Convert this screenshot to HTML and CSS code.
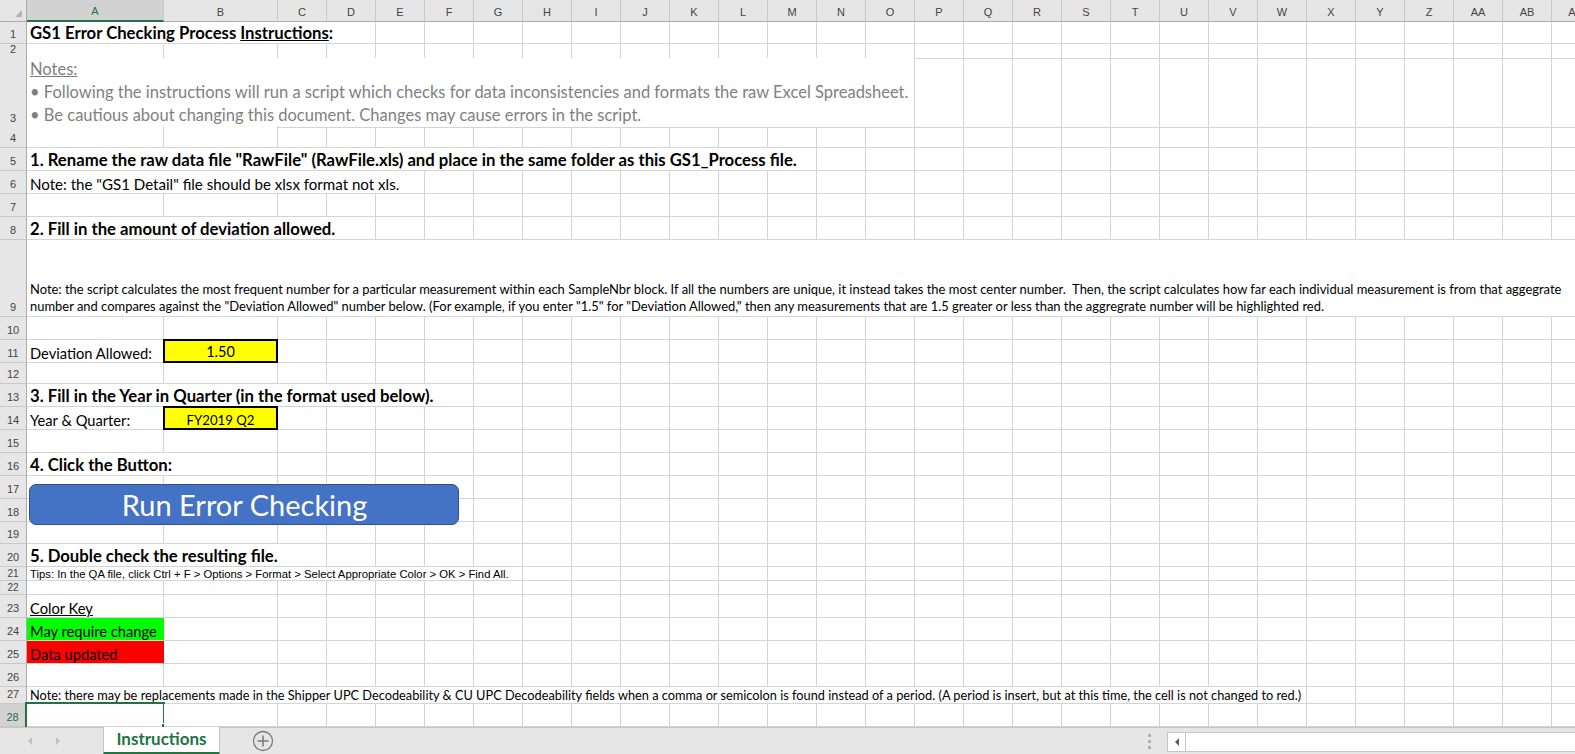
FILE: index.html
```html
<!DOCTYPE html>
<html>
<head>
<meta charset="utf-8">
<title>GS1 Error Checking Process</title>
<link rel="stylesheet" href="styles.css">
</head>
<body>
<div class="app">
  <div class="sheet">
    <div class="grid colhdr">
      <div class="ch corner"></div>
      <div class="ch sel">A</div><div class="ch">B</div><div class="ch">C</div><div class="ch">D</div><div class="ch">E</div><div class="ch">F</div><div class="ch">G</div><div class="ch">H</div><div class="ch">I</div><div class="ch">J</div><div class="ch">K</div><div class="ch">L</div><div class="ch">M</div><div class="ch">N</div><div class="ch">O</div><div class="ch">P</div><div class="ch">Q</div><div class="ch">R</div><div class="ch">S</div><div class="ch">T</div><div class="ch">U</div><div class="ch">V</div><div class="ch">W</div><div class="ch">X</div><div class="ch">Y</div><div class="ch">Z</div><div class="ch">AA</div><div class="ch">AB</div><div class="ch">AC</div>
    </div>

    <div class="grid r h22"><div class="rh">1</div><div class="c to-d title">GS1 Error Checking Process <u>Instructions</u>:</div><div class="fill from-e"></div></div>
    <div class="grid r h14"><div class="rh">2</div><div class="c"></div><div class="c"></div><div class="fill from-c"></div></div>
    <div class="grid r h68"><div class="rh">3</div><div class="c to-o notes"><div><u>Notes:</u></div><div>• Following the instructions will run a script which checks for data inconsistencies and formats the raw Excel Spreadsheet.</div><div>• Be cautious about changing this document. Changes may cause errors in the script.</div></div><div class="fill from-p"></div></div>
    <div class="grid r h22"><div class="rh">4</div><div class="c"></div><div class="c"></div><div class="fill from-c"></div></div>
    <div class="grid r h23"><div class="rh">5</div><div class="c to-m head">1. Rename the raw data file "RawFile" (RawFile.xls) and place in the same folder as this GS1_Process file.</div><div class="fill from-n"></div></div>
    <div class="grid r h23"><div class="rh">6</div><div class="c to-e body">Note: the "GS1 Detail" file should be xlsx format not xls.</div><div class="fill from-f"></div></div>
    <div class="grid r h23"><div class="rh">7</div><div class="c"></div><div class="c"></div><div class="fill from-c"></div></div>
    <div class="grid r h23"><div class="rh">8</div><div class="c to-d head">2. Fill in the amount of deviation allowed.</div><div class="fill from-e"></div></div>
    <div class="grid r h77"><div class="rh">9</div><div class="c to-end small lines"><div>Note: the script calculates the most frequent number for a particular measurement within each SampleNbr block. If all the numbers are unique, it instead takes the most center number.  Then, the script calculates how far each individual measurement is from that aggegrate</div><div>number and compares against the "Deviation Allowed" number below. (For example, if you enter "1.5" for "Deviation Allowed," then any measurements that are 1.5 greater or less than the aggregrate number will be highlighted red.</div></div></div>
    <div class="grid r h23"><div class="rh">10</div><div class="c"></div><div class="c"></div><div class="fill from-c"></div></div>
    <div class="grid r h23"><div class="rh">11</div><div class="c label">Deviation Allowed:</div><div class="c input">1.50</div><div class="fill from-c"></div></div>
    <div class="grid r h21"><div class="rh">12</div><div class="c"></div><div class="c"></div><div class="fill from-c"></div></div>
    <div class="grid r h23"><div class="rh">13</div><div class="c to-f head">3. Fill in the Year in Quarter (in the format used below).</div><div class="fill from-g"></div></div>
    <div class="grid r h23"><div class="rh">14</div><div class="c label">Year &amp; Quarter:</div><div class="c input input-sm">FY2019 Q2</div><div class="fill from-c"></div></div>
    <div class="grid r h23"><div class="rh">15</div><div class="c"></div><div class="c"></div><div class="fill from-c"></div></div>
    <div class="grid r h23"><div class="rh">16</div><div class="c to-b head">4. Click the Button:</div><div class="fill from-c"></div></div>
    <div class="grid r h23"><div class="rh">17</div><div class="c"></div><div class="c"></div><div class="fill from-c"></div></div>
    <div class="grid r h23"><div class="rh">18</div><div class="c"></div><div class="c"></div><div class="fill from-c"></div></div>
    <div class="grid r h22"><div class="rh">19</div><div class="c"></div><div class="c"></div><div class="fill from-c"></div></div>
    <div class="grid r h23"><div class="rh">20</div><div class="c to-c head">5. Double check the resulting file.</div><div class="fill from-d"></div></div>
    <div class="grid r h14"><div class="rh rh-sm">21</div><div class="c to-g tips">Tips: In the QA file, click Ctrl + F &gt; Options &gt; Format &gt; Select Appropriate Color &gt; OK &gt; Find All.</div><div class="fill from-h"></div></div>
    <div class="grid r h14"><div class="rh rh-sm">22</div><div class="c"></div><div class="c"></div><div class="fill from-c"></div></div>
    <div class="grid r h23"><div class="rh">23</div><div class="c label"><u>Color Key</u></div><div class="c"></div><div class="fill from-c"></div></div>
    <div class="grid r h23"><div class="rh">24</div><div class="c label key-green">May require change</div><div class="c"></div><div class="fill from-c"></div></div>
    <div class="grid r h23"><div class="rh">25</div><div class="c label key-red">Data updated</div><div class="c"></div><div class="fill from-c"></div></div>
    <div class="grid r h23"><div class="rh">26</div><div class="c"></div><div class="c"></div><div class="fill from-c"></div></div>
    <div class="grid r h17"><div class="rh">27</div><div class="c to-w small small-note">Note: there may be replacements made in the Shipper UPC Decodeability &amp; CU UPC Decodeability fields when a comma or semicolon is found instead of a period. (A period is insert, but at this time, the cell is not changed to red.)</div><div class="fill from-x"></div></div>
    <div class="grid r h23"><div class="rh rh-sel">28</div><div class="c active"><span class="selbox"><span class="handle"></span></span></div><div class="c"></div><div class="fill from-c"></div></div>

    <div class="run-btn">Run Error Checking</div>
  </div>

  <div class="tabbar">
    <div class="tabnav">
      <svg width="8" height="10" viewBox="0 0 8 10"><path d="M6 1 L2 5 L6 9 Z" fill="#c2c2c2"/></svg>
      <svg width="8" height="10" viewBox="0 0 8 10"><path d="M2 1 L6 5 L2 9 Z" fill="#c2c2c2"/></svg>
    </div>
    <div class="tab">Instructions</div>
    <div class="addtab">
      <svg width="22" height="22" viewBox="0 0 22 22"><circle cx="11" cy="11" r="9.5" fill="none" stroke="#7a7a7a" stroke-width="1.3"/><path d="M11 5.5 V16.5 M5.5 11 H16.5" stroke="#7a7a7a" stroke-width="1.5"/></svg>
    </div>
    <div class="spacer"></div>
    <div class="grip"><i></i><i></i><i></i></div>
    <div class="hscroll">
      <div class="hs-btn"><svg width="6" height="8" viewBox="0 0 6 8"><path d="M5 0 L1 4 L5 8 Z" fill="#5a5a5a"/></svg></div>
      <div class="hs-track"></div>
    </div>
  </div>
</div>
</body>
</html>
```

FILE: styles.css
```css
* { box-sizing: border-box; }
html, body { margin: 0; padding: 0; }
body {
  width: 1575px;
  height: 754px;
  overflow: hidden;
  background: #fff;
  font-family: Lato, "Open Sans", sans-serif;
  color: #000;
}
.app { display: flex; flex-direction: column; height: 754px; }
.sheet { position: relative; flex: 0 0 727px; overflow: hidden; }

.grid {
  display: grid;
  grid-template-columns: 27px 137px 114px repeat(27, 49px);
  width: 1600px;
}

/* column header */
.colhdr { height: 22px; background: #e6e6e6; }
.ch {
  border-right: 1px solid #c8c8c8;
  border-bottom: 1px solid #ababab;
  font: 11px "Liberation Sans", Arial, sans-serif;
  color: #444;
  display: flex;
  align-items: center;
  justify-content: center;
  padding-top: 2px;
}
.ch.sel { background: #d2d2d2; color: #217346; border-bottom: 2px solid #217346; }
.corner { position: relative; border-right-color: #ababab; }
.corner::after {
  content: "";
  position: absolute;
  right: 4px;
  bottom: 4px;
  border-left: 7px solid transparent;
  border-bottom: 7px solid #b4b4b4;
}

/* rows */
.h14 { height: 14px; }
.h17 { height: 17px; }
.h21 { height: 21px; }
.h22 { height: 22px; }
.h23 { height: 23px; }
.h68 { height: 68px; }
.h77 { height: 77px; }

.rh {
  background: #e6e6e6;
  border-right: 1px solid #ababab;
  border-bottom: 1px solid #c8c8c8;
  font: 11px "Liberation Sans", Arial, sans-serif;
  color: #444;
  display: flex;
  align-items: flex-end;
  justify-content: center;
  padding-bottom: 3px;
  line-height: 1;
}
.rh-sm { align-items: center; padding-bottom: 0; font-size: 10px; }
.rh-sel { background: #d2d2d2; color: #217346; border-right: 2px solid #217346; }

.c {
  position: relative;
  border-right: 1px solid #d4d4d4;
  border-bottom: 1px solid #d4d4d4;
  background: #fff;
  white-space: pre;
  display: flex;
  align-items: flex-end;
  padding: 0 0 0 3px;
  font-size: 14.8px;
  line-height: 1.15;
}
.fill {
  border-bottom: 1px solid #d4d4d4;
  background: repeating-linear-gradient(to right, transparent 0 48px, #d4d4d4 48px 49px);
}

/* spans */
.to-b { grid-column: 2 / 4; }
.to-c { grid-column: 2 / 5; }
.to-d { grid-column: 2 / 6; }
.to-e { grid-column: 2 / 7; }
.to-f { grid-column: 2 / 8; }
.to-g { grid-column: 2 / 9; }
.to-m { grid-column: 2 / 15; }
.to-o { grid-column: 2 / 17; }
.to-w { grid-column: 2 / 25; }
.to-end { grid-column: 2 / -1; border-right: none; }
.from-c { grid-column: 4 / -1; }
.from-d { grid-column: 5 / -1; }
.from-e { grid-column: 6 / -1; }
.from-f { grid-column: 7 / -1; }
.from-g { grid-column: 8 / -1; }
.from-h { grid-column: 9 / -1; }
.from-n { grid-column: 15 / -1; }
.from-p { grid-column: 17 / -1; }
.from-x { grid-column: 25 / -1; }

/* text styles */
.title { font-weight: 700; font-size: 16.7px; }
.head { font-weight: 700; font-size: 16.7px; }
.body { font-size: 15.1px; }
.label { font-size: 14.7px; }
.small { font-size: 12.95px; }
.small-note { font-size: 12.77px; }
.notes {
  flex-direction: column;
  align-items: flex-start;
  justify-content: flex-end;
  color: #7f7f7f;
  font-size: 16.5px;
  line-height: 23px;
  padding-bottom: 0;
}
.lines {
  flex-direction: column;
  align-items: flex-start;
  justify-content: flex-end;
  line-height: 17px;
  padding-bottom: 1px;
}
.tips {
  font: 11.3px "Liberation Sans", Arial, sans-serif;
  align-items: center;
}
.input {
  background: #ffff00;
  border: 2px solid #000;
  margin: -1px 0 0 -1px;
  justify-content: center;
  padding: 0;
  font-size: 14.5px;
}
.input-sm { font-size: 13.2px; }
.key-green { background: #00ff00; border-right-color: #00ff00; }
.key-red { background: #ff0000; border-right-color: #ff0000; }

/* selection */
.active { padding: 0; }
.selbox {
  position: absolute;
  left: -2px;
  top: -2px;
  right: -2px;
  bottom: -6px;
  border: 2px solid #217346;
  border-bottom: none;
}
.handle {
  position: absolute;
  right: -4px;
  bottom: 3px;
  width: 6px;
  height: 6px;
  background: #217346;
  border: 1px solid #fff;
}

/* floating shape */
.run-btn {
  position: absolute;
  left: 29px;
  top: 484px;
  width: 430px;
  height: 41px;
  background: #4472c4;
  border: 1px solid #2f528f;
  border-radius: 7px;
  color: #fff;
  font-size: 29px;
  display: flex;
  align-items: center;
  justify-content: center;
  padding-left: 1px;
}

/* sheet tab bar */
.tabbar {
  flex: 0 0 27px;
  display: flex;
  align-items: stretch;
  background: #e6e6e6;
  border-top: 1px solid #c6c6c6;
}
.tabnav {
  width: 103px;
  display: flex;
  align-items: center;
  gap: 20px;
  padding-left: 26px;
}
.tab {
  width: 117px;
  margin-top: -1px;
  background: #fff;
  border-left: 1px solid #c6c6c6;
  border-right: 1px solid #c6c6c6;
  border-bottom: 2px solid #217346;
  color: #217346;
  font-weight: 700;
  font-size: 17px;
  display: flex;
  align-items: center;
  justify-content: center;
  padding-bottom: 3px;
}
.addtab {
  width: 54px;
  display: flex;
  align-items: center;
  justify-content: center;
  padding-left: 32px;
}
.spacer { flex: 1; }
.grip {
  width: 36px;
  display: flex;
  flex-direction: column;
  align-items: center;
  justify-content: center;
  gap: 3px;
  padding-left: 0;
}
.grip i { display: block; width: 3px; height: 3px; background: #b0b0b0; }
.hscroll {
  width: 408px;
  margin: 4px 0 2px 0;
  display: flex;
  background: #fff;
  border: 1px solid #c6c6c6;
  border-right: none;
}
.hs-btn {
  width: 18px;
  border-right: 1px solid #c6c6c6;
  display: flex;
  align-items: center;
  justify-content: center;
}
.hs-track { flex: 1; }
```
